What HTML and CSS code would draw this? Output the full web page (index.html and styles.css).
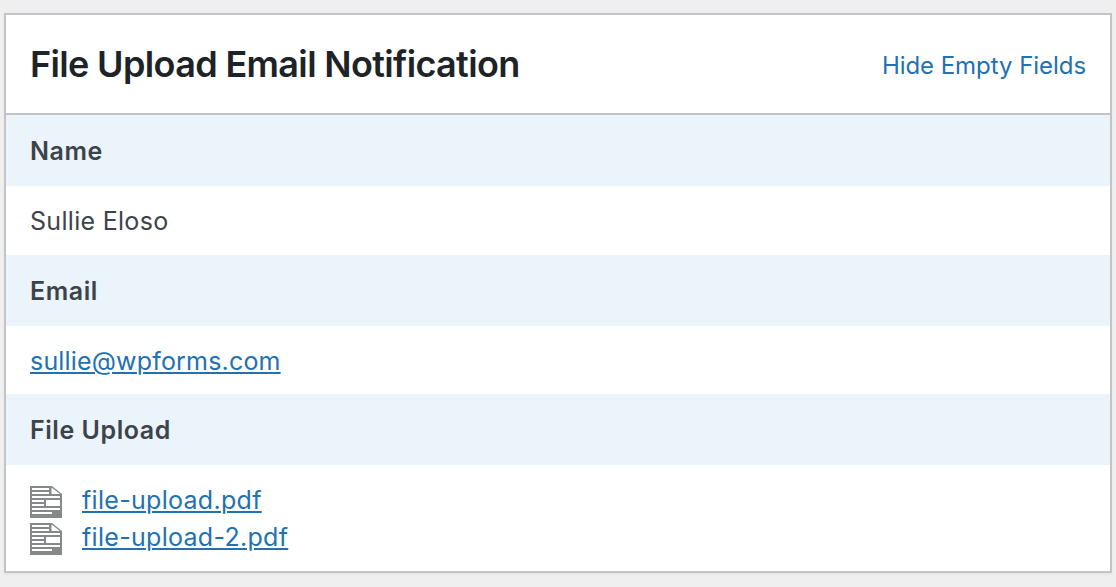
FILE: index.html
```html
<!DOCTYPE html>
<html lang="en">
<head>
    <meta charset="UTF-8">
    <meta name="viewport" content="width=device-width, initial-scale=1.0">
    <title>File Upload Email Notification</title>
    <link rel="stylesheet" href="styles.css">
</head>
<body>
    <!-- file icon, used once per uploaded file -->
    <svg class="icon-defs" width="0" height="0">
        <symbol id="file-icon" viewBox="0 0 32 32">
            <path fill="#86888a" d="M0 0H22L32 8V32H0Z"/>
            <path fill="#fff" d="M2 2H19V4H2ZM2 6H19V8H2ZM2 10H30V12H2ZM2 14H14V16H2ZM2 18H14V20H2ZM16 14H30V20H16ZM2 22H30V24H2ZM2 26H22V28H2Z"/>
            <path fill="#fff" d="M21.5 1.5V8H30Z"/>
        </symbol>
    </svg>

    <div class="container">
        <div class="header">
            <h2>File Upload Email Notification</h2>
            <a href="#" class="toggle-empty">Hide Empty Fields</a>
        </div>

        <div class="field">
            <p class="field-name">Name</p>
            <div class="field-value">Sullie Eloso</div>
        </div>

        <div class="field">
            <p class="field-name">Email</p>
            <div class="field-value email-value"><a href="mailto:sullie@wpforms.com">sullie@wpforms.com</a></div>
        </div>

        <div class="field">
            <p class="field-name">File Upload</p>
            <div class="field-value file-list">
                <div class="file">
                    <svg class="file-icon"><use href="#file-icon"/></svg>
                    <a href="#">file-upload.pdf</a>
                </div>
                <div class="file">
                    <svg class="file-icon"><use href="#file-icon"/></svg>
                    <a href="#">file-upload-2.pdf</a>
                </div>
            </div>
        </div>
    </div>
</body>
</html>
```
FILE: styles.css
```css
* {
    box-sizing: border-box;
}

body {
    font-family: Inter, "Liberation Sans", sans-serif;
    font-size: 25px;
    background-color: #efefef;
    color: #3c434a;
    margin: 0;
    padding: 13px 4px 14px;
}

.icon-defs {
    display: block;
}

.container {
    background-color: #ffffff;
    border: 2px solid #c3c4c7;
    box-shadow: 0 2px 2px rgba(0, 0, 0, 0.04);
}

/* title bar */
.header {
    display: flex;
    align-items: center;
    justify-content: space-between;
    height: 100px;
    padding: 0 24px;
    border-bottom: 2px solid #c3c4c7;
}

h2 {
    margin: 0;
    color: #1d2327;
    font-size: 36px;
    font-weight: 600;
    letter-spacing: -0.65px;
}

a {
    color: #2271b1;
    text-decoration-thickness: 2px;
    text-underline-offset: 2px;
}

.toggle-empty {
    padding-top: 2px;
    font-size: 24px;
    letter-spacing: -0.05px;
    text-decoration: none;
}

/* fields */
.field-name {
    display: flex;
    align-items: center;
    height: 71px;
    margin: 0;
    padding: 0 24px;
    background-color: #ebf3fb;
    font-weight: 600;
    letter-spacing: 0.55px;
}

.field-value {
    display: flex;
    align-items: center;
    height: 69px;
    padding: 0 24px;
    letter-spacing: 0.3px;
}

.email-value {
    height: 68px;
    padding-top: 2px;
    letter-spacing: 0.18px;
}

.file-list {
    flex-direction: column;
    align-items: flex-start;
    height: 106px;
    padding-top: 17px;
}

.file {
    display: flex;
    align-items: center;
    gap: 20px;
    height: 37px;
}

.file a {
    padding-bottom: 2px;
}

.file-icon {
    width: 32px;
    height: 32px;
    margin-top: 3px;
}
```
